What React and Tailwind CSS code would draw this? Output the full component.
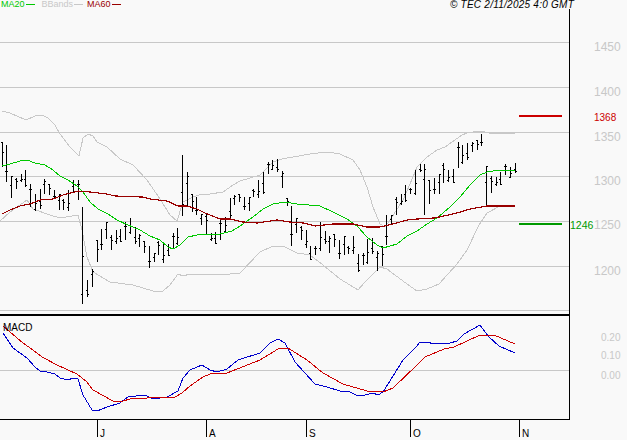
const bars = [[142,167],[145,182],[176,198],[178,189],[174,182],[170,187],[184,207],[194,211],[189,209],[179,194],[184,195],[190,199],[194,210],[199,210],[190,211],[180,192],[180,200],[207,304],[280,297],[269,287],[240,262],[229,250],[222,239],[235,250],[230,244],[229,242],[222,240],[218,234],[227,244],[234,247],[241,253],[246,268],[253,262],[241,255],[244,263],[244,256],[233,249],[228,245],[155,216],[172,207],[194,212],[197,215],[214,225],[214,235],[233,241],[232,244],[219,240],[217,232],[198,219],[195,205],[194,202],[197,210],[197,211],[189,197],[180,198],[172,194],[162,174],[160,170],[159,172],[171,188],[198,206],[206,246],[218,233],[226,240],[230,248],[246,260],[246,255],[222,251],[231,244],[236,253],[234,247],[240,259],[236,255],[246,254],[236,254],[254,272],[253,265],[239,264],[238,254],[251,271],[246,266],[215,245],[215,225],[197,215],[194,205],[185,202],[188,194],[170,195],[164,172],[164,215],[180,204],[178,194],[174,194],[163,183],[170,182],[169,183],[142,168],[145,164],[143,160],[142,152],[140,150],[134,146],[166,206],[176,193],[177,186],[172,185],[164,175],[167,178],[163,173]];

const green = "2,166 10,164 20,161 27,160 35,163 45,165 53,170 60,176 68,180 77,186 83,192 90,202 98,209 108,214 117,220 128,225 140,230 150,236 160,240 168,247 173,249 180,245 188,237 197,235 205,234 220,234 232,231 240,226 253,217 263,209 273,204 285,202 297,204 320,206 333,212 347,219 357,226 367,237 377,245 383,248 397,244 407,236 417,231 427,224 437,218 450,207 460,197 470,185 480,175 487,172 500,170 515,170";
const darkRed = "2,214 10,210 20,206 30,204 40,200 53,199 63,195 78,191 90,192 107,194 115,196 142,197 150,199 167,201 178,206 187,206 197,209 205,213 210,215 220,219 230,219 243,222 257,223 277,220 290,222 303,223 315,226 333,224 353,224 367,227 380,227 393,224 407,220 417,219 434,218 444,216 457,213 470,209 487,206 515,206";
const upper = "2,111 10,113 26,120 35,116 42,115 48,118 55,125 60,134 70,147 79,156 83,138 88,134 93,136 97,142 107,147 120,159 133,165 147,180 160,199 170,215 177,221 183,202 193,197 202,194 210,194 223,192 233,185 240,181 260,175 265,170 273,162 282,159 293,157 310,154 327,152 340,154 353,160 360,170 367,187 373,207 380,224 385,227 392,217 403,200 413,177 417,167 427,157 437,150 445,147 462,135 467,133 480,131 489,133 504,133 515,134";
const lower = "0,221 10,212 27,200 33,209 50,215 60,218 78,215 82,230 87,257 93,272 110,282 133,285 153,291 163,291 170,285 178,274 183,276 190,274 210,274 230,274 240,273 260,252 273,246 283,246 297,253 310,255 323,265 340,279 350,285 358,290 365,282 380,267 387,269 407,284 417,291 427,289 439,284 457,264 467,250 479,225 487,213 500,206 515,206";
const macdBlue = "3,333 13,348 27,358 35,367 40,371 47,372 55,374 60,378 68,380 73,378 78,379 83,395 92,410 97,411 107,407 120,403 128,397 145,395 153,399 167,397 178,391 183,378 190,370 202,365 210,370 217,372 227,369 238,360 260,353 270,343 278,339 285,343 295,362 315,384 327,387 340,391 350,392 358,396 365,395 373,393 378,395 383,392 403,360 417,346 420,342 427,342 434,344 450,343 457,341 464,334 480,325 489,337 499,346 515,353";
const macdRed = "3,326 10,332 23,343 33,350 42,357 57,365 77,374 87,382 93,390 113,401 123,401 130,399 147,398 175,397 182,393 190,386 203,377 210,374 227,373 260,360 278,349 288,348 307,360 323,373 343,384 367,391 383,392 393,388 417,365 425,357 444,349 454,347 480,335 494,335 515,344";

const grid = [42, 87, 132, 176, 221, 266, 310, 370];
const priceLabels = [["1450", 51], ["1400", 96], ["1350", 141], ["1300", 185], ["1250", 229], ["1200", 275]];
const macdLabels = [["0.20", 341], ["0.10", 359], ["0.00", 379]];
const months = [["J", 97], ["A", 206], ["S", 306], ["O", 410], ["N", 519]];

function Legend({ label, className, lineClassName }) {
  return (
    <div className={`flex items-center gap-[1px] ${className}`}>
      <span>{label}</span>
      <span className={`h-px w-[9px] ${lineClassName}`} />
    </div>
  );
}

export default function App() {
  return (
    <div className="h-[440px] w-[627px] overflow-hidden bg-[#f9f9f9] font-['Liberation_Sans',Arial,sans-serif]">
      <div className="flex h-[9px] items-center justify-between overflow-visible pl-px pr-[53px] text-[9px] leading-none">
        <div className="flex gap-[7px]">
          <Legend label="MA20" className="text-[#00c800]" lineClassName="bg-[#00c800]" />
          <Legend label="BBands" className="text-[#c8c8c8]" lineClassName="bg-[#c8c8c8]" />
          <Legend label="MA60" className="ml-[-3px] text-[#990000]" lineClassName="bg-[#990000]" />
        </div>
        <span className="text-[10px] italic tracking-[0.25px] text-black">© TEC 2/11/2025 4:0 GMT</span>
      </div>
      <svg width="627" height="431" viewBox="0 9 627 431" className="block">
        <g shapeRendering="crispEdges">
          {grid.map((y) => (
            <line key={y} x1="0" x2="569" y1={y + 0.5} y2={y + 0.5} stroke="#c8c8c8" />
          ))}
          <polyline points={upper} fill="none" stroke="#c8c8c8" />
          <polyline points={lower} fill="none" stroke="#c8c8c8" />
          {bars.map(([hi, lo], i) => {
            const x = Math.floor(2.2 + 4.75 * i) + 0.5;
            const open = Math.round(hi + (lo - hi) * (((i * 37) % 10) / 10));
            const close = Math.round(hi + (lo - hi) * (((i * 53 + 4) % 10) / 10));
            return (
              <g key={i} stroke="#000">
                <line x1={x} x2={x} y1={hi} y2={lo} />
                <line x1={x - 1.5} x2={x} y1={open + 0.5} y2={open + 0.5} />
                <line x1={x} x2={x + 1.5} y1={close + 0.5} y2={close + 0.5} />
              </g>
            );
          })}
          <polyline points={green} fill="none" stroke="#00c800" />
          <polyline points={darkRed} fill="none" stroke="#990000" strokeWidth="1.2" />
          <polyline points={macdBlue} fill="none" stroke="#0000cc" />
          <polyline points={macdRed} fill="none" stroke="#cc0000" />
          <line x1="569.5" x2="569.5" y1="9" y2="419.5" stroke="#000" />
          <rect x="0" y="314" width="570" height="2" fill="#000" />
          <line x1="0" x2="570" y1="419.5" y2="419.5" stroke="#000" />
          <rect x="519" y="115" width="43" height="2" fill="#cc0000" />
          <rect x="519" y="223" width="43" height="2" fill="#009900" />
          {months.map(([m, x]) => (
            <line key={m} x1={x + 0.5} x2={x + 0.5} y1="419" y2="437" stroke="#000" />
          ))}
        </g>
        <g fontFamily="Liberation Sans, Arial, sans-serif">
          {priceLabels.map(([t, y]) => (
            <text key={t} x="594" y={y} fontSize="12" fill="#c8c8c8">{t}</text>
          ))}
          {macdLabels.map(([t, y]) => (
            <text key={t} x="601" y={y} fontSize="10" fill="#c8c8c8">{t}</text>
          ))}
          <text x="594" y="121" fontSize="10" fill="#cc0000">1368</text>
          <text x="570" y="229" fontSize="10.5" fill="#009900">1246</text>
          <text x="3" y="331" fontSize="10" fill="#000">MACD</text>
          {months.map(([m, x]) => (
            <text key={m} x={x + 3} y="437" fontSize="10" fill="#000">{m}</text>
          ))}
        </g>
      </svg>
    </div>
  );
}
